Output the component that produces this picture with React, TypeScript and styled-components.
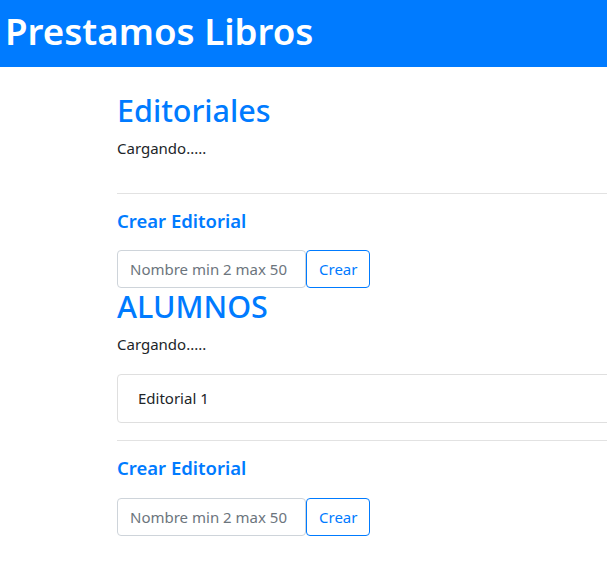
import React from 'react';
import styled, { createGlobalStyle } from 'styled-components';

const GlobalStyle = createGlobalStyle`
  html, body {
    margin: 0;
    padding: 0;
    overflow-x: hidden;
  }
  body {
    font-family: "Noto Sans", "Open Sans", sans-serif;
    font-size: 16px;
    line-height: 1.5;
    color: #212529;
    background: #fff;
  }
  *, *::before, *::after {
    box-sizing: border-box;
  }
`;

const Header = styled.header`
  background: #007bff;
  height: 67px;
  display: flex;
  align-items: center;
  padding: 0 5px 4px;
`;

const Title = styled.h1`
  margin: 0;
  color: #fff;
  font-size: 36.7px;
  font-weight: 600;
  line-height: 1.2;
`;

const Main = styled.main`
  padding-left: 117px;
  width: 1000px;
`;

const Section = styled.section`
  display: flex;
  flex-direction: column;
`;

const SectionTitle = styled.h2<{ $top: number }>`
  margin: ${(p) => p.$top}px 0 8px;
  color: #007bff;
  font-size: 30.5px;
  font-weight: 500;
  line-height: 1.2;
`;

const Status = styled.p<{ $bottom: number }>`
  margin: 0 0 ${(p) => p.$bottom}px;
  font-size: 15px;
`;

const Rule = styled.hr`
  margin: 0 0 16px;
  border: 0;
  border-top: 1px solid #e2e2e2;
`;

const SubTitle = styled.h5`
  margin: 0 0 18px;
  color: #007bff;
  font-size: 18.5px;
  font-weight: 600;
  line-height: 1.2;
`;

const Form = styled.form`
  display: flex;
  align-items: stretch;
  height: 38px;
`;

const Input = styled.input`
  width: 189px;
  padding: 6px 12px;
  font-family: inherit;
  font-size: 15px;
  color: #495057;
  border: 1px solid #ced4da;
  border-radius: 4px;
  outline: none;

  &::placeholder {
    color: #6c757d;
  }
`;

const Button = styled.button`
  width: 64px;
  padding: 6px 12px;
  font-family: inherit;
  font-size: 15px;
  color: #007bff;
  background: transparent;
  border: 1px solid #007bff;
  border-radius: 4px;
  cursor: pointer;
`;

const List = styled.ul`
  margin: 0 0 17px;
  padding: 0;
  list-style: none;
`;

const ListItem = styled.li`
  padding: 12px 20px;
  height: 49px;
  font-size: 15px;
  border: 1px solid #dfdfdf;
  border-radius: 4px;
`;

const CreateForm = () => (
  <>
    <SubTitle>Crear Editorial</SubTitle>
    <Form onSubmit={(e) => e.preventDefault()}>
      <Input placeholder="Nombre min 2 max 50" />
      <Button type="submit">Crear</Button>
    </Form>
  </>
);

const App = () => {
  const items = ['Editorial 1'];
  return (
    <>
      <GlobalStyle />
      <Header>
        <Title>Prestamos Libros</Title>
      </Header>
      <Main>
        <Section>
          <SectionTitle $top={25}>Editoriales</SectionTitle>
          <Status $bottom={34}>Cargando.....</Status>
          <Rule />
          <CreateForm />
        </Section>
        <Section>
          <SectionTitle $top={0}>ALUMNOS</SectionTitle>
          <Status $bottom={19}>Cargando.....</Status>
          <List>
            {items.map((item) => (
              <ListItem key={item}>{item}</ListItem>
            ))}
          </List>
          <Rule />
          <CreateForm />
        </Section>
      </Main>
    </>
  );
};

export default App;
